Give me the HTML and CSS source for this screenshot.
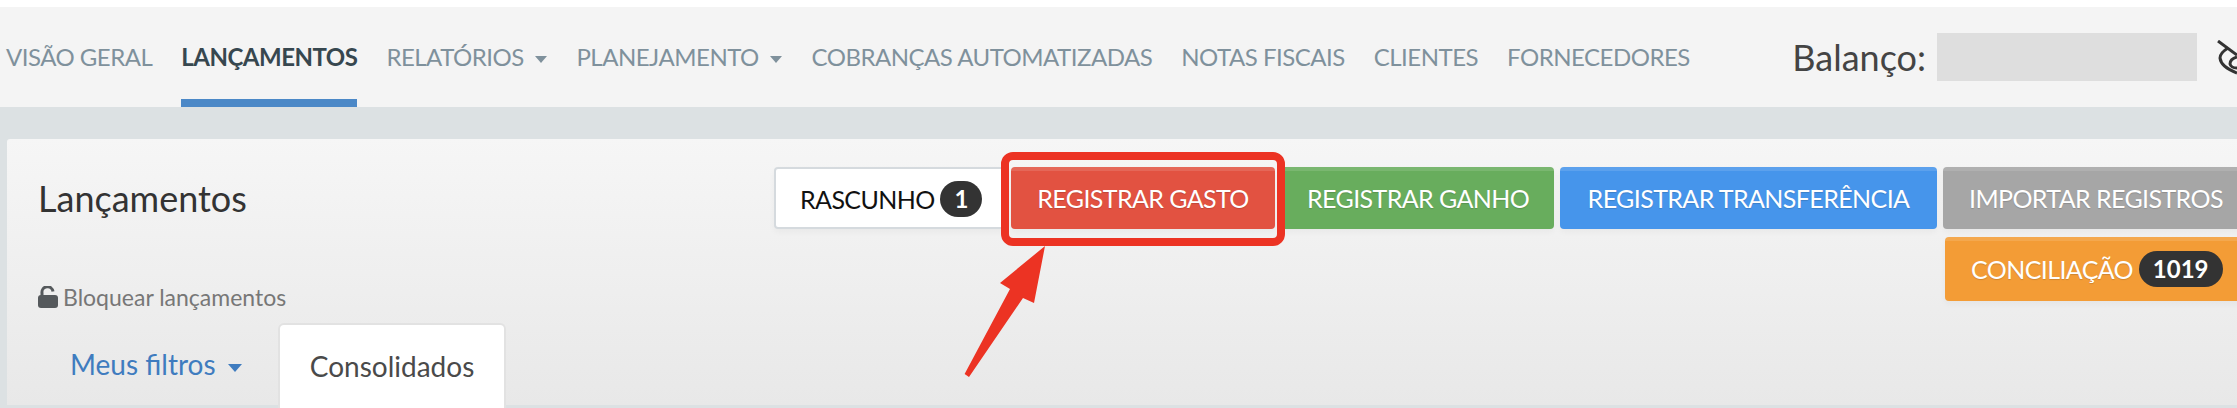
FILE: index.html
```html
<!DOCTYPE html>
<html lang="pt-BR">
<head>
<meta charset="UTF-8" />
<title>Lançamentos</title>
<link rel="stylesheet" href="styles.css">
</head>
<body>

<nav class="topnav">
  <ul class="menu">
    <li class="menu-item">VISÃO GERAL</li>
    <li class="menu-item active">LANÇAMENTOS</li>
    <li class="menu-item">RELATÓRIOS <span class="caret"></span></li>
    <li class="menu-item">PLANEJAMENTO <span class="caret"></span></li>
    <li class="menu-item">COBRANÇAS AUTOMATIZADAS</li>
    <li class="menu-item">NOTAS FISCAIS</li>
    <li class="menu-item">CLIENTES</li>
    <li class="menu-item">FORNECEDORES</li>
  </ul>
  <div class="balance">
    <span class="balance-label">Balanço:</span>
    <span class="balance-value"></span>
    <svg class="eye-icon" width="20" height="36" viewBox="0 0 20 36" fill="none" stroke="#333" stroke-width="3">
      <path d="M1 1L20 15" />
      <path d="M11 8Q3 13 3 18Q4 27 20 33" />
      <path d="M20 17Q13 19 13 24Q14 28 20 28" />
    </svg>
  </div>
</nav>

<main class="content">
  <section class="panel">
    <div class="panel-head">
      <div class="panel-left">
        <h1 class="title">Lançamentos</h1>
        <div class="lock-row">
          <svg class="lock-icon" width="20" height="22" viewBox="0 0 20 22">
            <path fill="none" stroke="#55595c" stroke-width="3" d="M4 11V7a5.500 5.500 0 0 1 11-1.500" />
            <rect x="0" y="9" width="20" height="13" rx="3" fill="#55595c" />
          </svg>
          <span>Bloquear lançamentos</span>
        </div>
      </div>
      <div class="actions">
        <div class="action-row">
          <button class="btn btn-draft">RASCUNHO <span class="count">1</span></button>
          <button class="btn btn-red">REGISTRAR GASTO</button>
          <button class="btn btn-green">REGISTRAR GANHO</button>
          <button class="btn btn-blue">REGISTRAR TRANSFERÊNCIA</button>
          <button class="btn btn-gray">IMPORTAR REGISTROS</button>
        </div>
        <div class="action-row second">
          <button class="btn btn-orange">CONCILIAÇÃO <span class="count">1019</span></button>
        </div>
      </div>
    </div>
    <div class="tabs">
      <a class="tab tab-link">Meus filtros <span class="caret caret-blue"></span></a>
      <a class="tab tab-current">Consolidados</a>
    </div>
  </section>
</main>

<!-- annotation drawn over the screenshot -->
<div class="mark-box"></div>
<svg class="mark-arrow" width="90" height="135" viewBox="0 0 90 135">
  <polygon fill="#ec3323" points="85,0 74,57 63,52 9,131 4.600,128 50,43 40,37" />
</svg>

</body>
</html>
```

FILE: styles.css
```css
* {
  box-sizing: border-box;
}
html, body {
  margin: 0;
  padding: 0;
}
body {
  position: relative;
  width: 2237px;
  height: 408px;
  overflow: hidden;
  padding-top: 7px;
  background: #fff;
  font-family: Lato, sans-serif;
}
.topnav {
  display: flex;
  justify-content: space-between;
  height: 100px;
  background: #f4f4f4;
}
.menu {
  display: flex;
  gap: 29px;
  list-style: none;
  margin: 0;
  padding: 0 0 0 6px;
}
.menu-item {
  height: 100px;
  padding-top: 35px;
  font-size: 24px;
  line-height: 30px;
  letter-spacing: -0.5px;
  color: #7f919c;
  white-space: nowrap;
}
.menu-item.active {
  font-weight: bold;
  color: #37474f;
  border-bottom: 8px solid #4b88c7;
}
.caret {
  display: inline-block;
  width: 0;
  height: 0;
  margin-left: 6px;
  vertical-align: 3px;
  border-left: 6px solid transparent;
  border-right: 6px solid transparent;
  border-top: 7px solid #7f919c;
}
.balance {
  display: flex;
  align-items: flex-start;
  padding-top: 26px;
  flex: none;
}
.balance-label {
  font-size: 36px;
  line-height: 48px;
  color: #444;
  margin-right: 11px;
}
.balance-value {
  width: 260px;
  height: 48px;
  background: #dedede;
}
.eye-icon {
  margin: 7px 0 0 20px;
}
.content {
  height: 301px;
  padding: 32px 0 0 7px;
  background: #dce1e3;
}
.panel {
  height: 269px;
  padding-top: 28px;
  background: linear-gradient(#f6f6f6, #e8e8e8);
  border-radius: 3px 0 0 0;
  border-bottom: 3px solid #dce1e3;
}
.panel-head {
  display: flex;
  justify-content: space-between;
  height: 156px;
}
.panel-left {
  padding-left: 31px;
}
.title {
  margin: 0;
  padding-top: 9px;
  font-size: 36px;
  font-weight: normal;
  line-height: 44px;
  color: #333;
}
.lock-row {
  display: flex;
  align-items: center;
  gap: 5px;
  margin-top: 64px;
  font-size: 23px;
  line-height: 26px;
  color: #777;
}
.actions {
  display: flex;
  flex-direction: column;
  flex: none;
  width: 1463px;
  gap: 8px;
}
.action-row {
  display: flex;
  gap: 6px;
}
.action-row.second {
  padding-left: 1171px;
}
.btn {
  flex: none;
  height: 62px;
  padding: 0 26px 4px;
  font-family: Lato, sans-serif;
  font-size: 25px;
  letter-spacing: -0.6px;
  color: #fff;
  white-space: nowrap;
  text-shadow: 0 1px 1px rgba(0, 0, 0, 0.15);
  border: none;
  border-top: 4px solid rgba(255, 255, 255, 0.12);
  border-radius: 4px;
  box-shadow: 0 3px 6px rgba(0, 0, 0, 0.04);
}
.btn-draft {
  width: 231px;
  padding: 2px 0 0 24px;
  background: #fff;
  color: #111;
  border: 2px solid #d5dade;
  text-align: left;
  text-shadow: none;
}
.btn-red {
  width: 264px;
  background: #e25241;
}
.btn-green {
  width: 273px;
  background: #68ad5d;
}
.btn-blue {
  width: 377px;
  background: #4695eb;
}
.btn-gray {
  width: 308px;
  background: #a6a6a6;
  text-align: left;
}
.btn-orange {
  width: 300px;
  height: 64px;
  background: #f39c36;
  text-align: left;
}
.count {
  display: inline-block;
  min-width: 42px;
  padding: 0 14px;
  font-size: 24px;
  font-weight: bold;
  letter-spacing: 0;
  line-height: 36px;
  text-align: center;
  vertical-align: 1px;
  color: #fff;
  background: #333;
  border-radius: 18px;
  text-shadow: none;
}
.btn-draft .count {
  padding: 0 6px;
}
.tabs {
  display: flex;
  padding-left: 31px;
}
.tab {
  height: 85px;
  padding-top: 23px;
  font-size: 28px;
  line-height: 36px;
}
.tab-link {
  width: 240px;
  padding-left: 32px;
  color: #3f7cbf;
}
.tab-current {
  width: 228px;
  text-align: center;
  color: #4a4a4a;
  background: #fff;
  border: 2px solid #e2e2e2;
  border-bottom: none;
  border-radius: 6px 6px 0 0;
}
.caret-blue {
  border-left-width: 7.500px;
  border-right-width: 7.500px;
  border-top: 8px solid #3f7cbf;
  vertical-align: 3px;
  margin-left: 5px;
}
.mark-box {
  position: absolute;
  left: 1001px;
  top: 152px;
  width: 284px;
  height: 94px;
  border: 8px solid #ec3323;
  border-radius: 12px;
}
.mark-arrow {
  position: absolute;
  left: 960px;
  top: 246px;
}
```
